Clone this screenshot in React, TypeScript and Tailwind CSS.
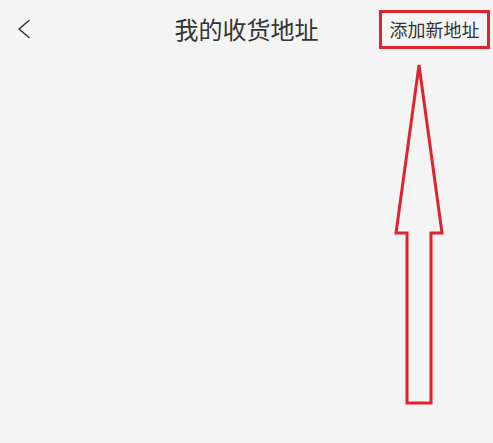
import React from 'react';

const AddressPage: React.FC = () => {
  return (
    <div
      className="relative w-[493px] h-[443px] bg-[#f4f4f4] text-[#333333] overflow-hidden"
      style={{ fontFamily: '"Noto Sans CJK SC", "Noto Sans", sans-serif' }}
    >
      {/* 顶部导航 */}
      <div className="relative flex items-center h-[58px]">
        <button className="ml-[16px] w-[16px] h-[24px] flex items-center justify-center">
          <svg width="14" height="20" viewBox="0 0 14 20" fill="none">
            <path d="M12 1.5 L2 10 L12 18.5" stroke="#333" strokeWidth="1.6" strokeLinecap="round" strokeLinejoin="round" />
          </svg>
        </button>
        <h1 className="absolute left-0 right-0 text-center text-[24px] leading-none pointer-events-none">
          我的收货地址
        </h1>
        <button className="ml-auto mr-[3px] h-[39px] w-[111px] border-[3px] border-[#e0242d] flex items-center justify-center text-[18px] leading-none">
          添加新地址
        </button>
      </div>

      {/* 指向按钮的箭头 */}
      <svg className="absolute left-0 top-0" width="493" height="443" viewBox="0 0 493 443" fill="none">
        <path
          d="M419 65 L396 233 L407 233 L407 403 L431 403 L431 233 L442 233 Z"
          stroke="#e0242d"
          strokeWidth="3"
          strokeLinejoin="miter"
        />
      </svg>
    </div>
  );
};

export default function App() {
  return <AddressPage />;
}
